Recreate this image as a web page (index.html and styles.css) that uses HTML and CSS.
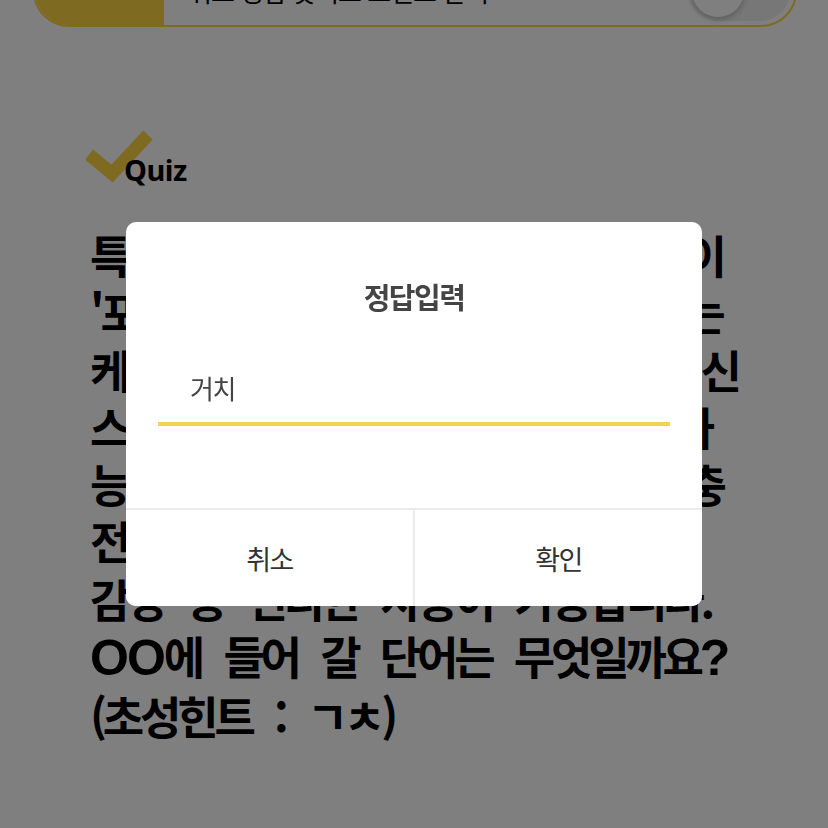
FILE: index.html
```html
<!DOCTYPE html>
<html lang="ko">
<head>
    <meta charset="UTF-8">
    <meta name="viewport" content="width=device-width, initial-scale=1.0">
    <title>Quiz</title>
    <link rel="stylesheet" href="styles.css">
</head>
<body>
    <div class="page">
        <div class="topbar">
            <div class="topbar-tag"></div>
            <div class="topbar-text">퀴즈 정답 맞히고 포인트 받기</div>
            <div class="toggle"><span class="toggle-knob"></span></div>
        </div>
        <div class="quiz">
            <div class="quiz-title">
                <svg class="quiz-check" width="70" height="58" viewBox="0 0 70 58">
                    <path d="M3 26.5 L26 45.5 L62 7" fill="none" stroke="#fed444" stroke-width="13"/>
                </svg>
                <span>Quiz</span>
            </div>
            <p class="quiz-question">
                특허받은 회전 링 구조를 적용한 이<br>
                '포켓링 플러스'는 뒷면에 착 붙이는<br>
                케이스 형태라서 휴대성이 뛰어난 신<br>
                스마트 액세서리로, 각도 조절이 가<br>
                능하고 각종 영상 시청이나 무선 충<br>
                전 중에도 편히 볼 수 있어 영화<br>
                감상 등 편리한 사용이 가능합니다.<br>
                <span class="latin">OO</span>에 들어 갈 단어는 무엇일까요<span class="latin">?</span><br>
                (초성힌트 : ㄱㅊ)
            </p>
        </div>
    </div>

    <!-- 정답 입력 팝업 -->
    <div class="dim">
        <div class="dialog">
            <h2 class="dialog-title">정답입력</h2>
            <div class="dialog-field">
                <input type="text" class="dialog-input" value="거치">
            </div>
            <div class="dialog-buttons">
                <button type="button" class="dialog-btn">취소</button>
                <button type="button" class="dialog-btn">확인</button>
            </div>
        </div>
    </div>
</body>
</html>
```

FILE: styles.css
```css
* {
    margin: 0;
    padding: 0;
    box-sizing: border-box;
}
body {
    background-color: #fff;
    font-family: "Noto Sans CJK KR", "Noto Sans", sans-serif;
    color: #000;
    overflow: hidden;
}
.page {
    padding: 0 31px 0 33px;
}

/* 상단 바 (스크롤되어 윗부분은 잘려 있음) */
.topbar {
    display: flex;
    height: 72px;
    margin-top: -45px;
    border: 2px solid #fed444;
    border-radius: 36px;
    overflow: hidden;
}
.topbar-tag {
    width: 129px;
    background-color: #fed444;
}
.topbar-text {
    flex: 1;
    padding: 21px 0 0 24px;
    font-size: 26px;
    line-height: 26px;
    letter-spacing: -1px;
    color: #000;
}
.toggle {
    display: flex;
    align-self: flex-end;
    width: 102px;
    height: 60px;
    margin: 0 5px 4px 0;
    padding: 4px;
    border-radius: 30px;
    background-color: #eee;
}
.toggle-knob {
    width: 52px;
    height: 52px;
    border-radius: 50%;
    background-color: #fff;
    box-shadow: 0 2px 6px rgba(0, 0, 0, 0.25);
}

/* 퀴즈 */
.quiz {
    padding-left: 53px;
}
.quiz-title {
    display: flex;
    align-items: flex-end;
    margin-top: 101px;
}
.quiz-check {
    display: block;
}
.quiz-title span {
    margin: 0 0 2px -32px;
    font-family: "Noto Sans", sans-serif;
    font-weight: 700;
    font-size: 29px;
    line-height: 29px;
    letter-spacing: -0.5px;
}
.quiz-question {
    margin: 40px 0 0 4px;
    font-size: 45px;
    font-weight: 700;
    line-height: 57.3px;
    letter-spacing: -4.2px;
    word-spacing: 14px;
    white-space: nowrap;
}
.quiz-question .latin {
    font-family: "Liberation Sans", sans-serif;
    font-size: 50px;
    letter-spacing: -2px;
}

/* 팝업 */
.dim {
    position: fixed;
    top: 0;
    left: 0;
    right: 0;
    bottom: 0;
    display: flex;
    align-items: center;
    justify-content: center;
    background-color: rgba(0, 0, 0, 0.5);
}
.dialog {
    width: 576px;
    border-radius: 10px;
    background-color: #fff;
    overflow: hidden;
}
.dialog-title {
    padding-top: 54px;
    font-size: 29px;
    font-weight: 700;
    line-height: 40px;
    letter-spacing: -1.5px;
    text-align: center;
    color: #444;
}
.dialog-field {
    margin: 46px 32px 82px;
}
.dialog-input {
    display: block;
    width: 100%;
    height: 64px;
    padding: 0 32px 10px;
    border: none;
    border-bottom: 4px solid #f4d24b;
    outline: none;
    font-family: "Noto Sans CJK KR", sans-serif;
    font-size: 26px;
    letter-spacing: -1.5px;
    color: #444;
}
.dialog-buttons {
    display: flex;
    height: 98px;
    border-top: 2px solid #ebebeb;
}
.dialog-btn {
    flex: 1;
    border: none;
    background-color: #fff;
    font-family: "Noto Sans CJK KR", sans-serif;
    font-size: 27px;
    letter-spacing: -1.5px;
    color: #333;
}
.dialog-btn + .dialog-btn {
    border-left: 2px solid #ebebeb;
}
```
